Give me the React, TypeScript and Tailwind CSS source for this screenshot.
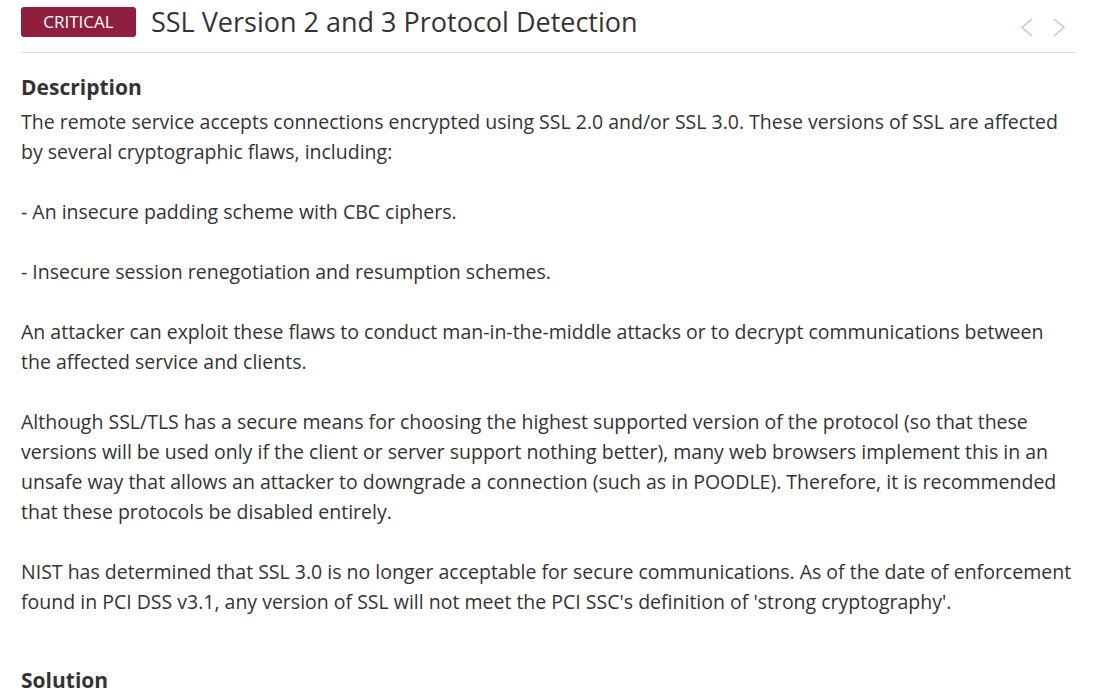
const description = `The remote service accepts connections encrypted using SSL 2.0 and/or SSL 3.0. These versions of SSL are affected by several cryptographic flaws, including:

- An insecure padding scheme with CBC ciphers.

- Insecure session renegotiation and resumption schemes.

An attacker can exploit these flaws to conduct man-in-the-middle attacks or to decrypt communications between the affected service and clients.

Although SSL/TLS has a secure means for choosing the highest supported version of the protocol (so that these versions will be used only if the client or server support nothing better), many web browsers implement this in an unsafe way that allows an attacker to downgrade a connection (such as in POODLE). Therefore, it is recommended that these protocols be disabled entirely.

NIST has determined that SSL 3.0 is no longer acceptable for secure communications. As of the date of enforcement found in PCI DSS v3.1, any version of SSL will not meet the PCI SSC's definition of 'strong cryptography'.`

function Chevron({ dir }: { dir: 'left' | 'right' }) {
  return (
    <svg width="12" height="19" viewBox="0 0 12 19" fill="none" stroke="currentColor" strokeWidth="1.6">
      {dir === 'left' ? <polyline points="11,1 1,9.5 11,18" /> : <polyline points="1,1 11,9.5 1,18" />}
    </svg>
  )
}

export default function App() {
  return (
    <div className="h-[696px] overflow-hidden bg-white font-['Open_Sans',sans-serif] text-[#333]">
      <div className="ml-[21px] w-[1055px]">
        {/* Header */}
        <div className="flex h-[53px] items-start border-b border-[#ddd] pt-[7px]">
          <span className="flex h-[30px] w-[115px] items-center justify-center rounded-[3px] bg-[#8f1f3f] text-[17px] text-white">
            CRITICAL
          </span>
          <h1 className="ml-[15px] flex-1 text-[27px] leading-[30px] text-[#333]">
            SSL Version 2 and 3 Protocol Detection
          </h1>
          <div className="mt-[11px] mr-[11px] flex items-center gap-[20px] text-[#c4cbd3]">
            <Chevron dir="left" />
            <Chevron dir="right" />
          </div>
        </div>

        {/* Description */}
        <h2 className="mt-[22px] text-[21px] font-bold leading-[24px]">Description</h2>
        <p className="mt-[8px] whitespace-pre-line text-[19.5px] leading-[30px]">{description}</p>

        {/* Solution */}
        <h2 className="mt-[51px] text-[21px] font-bold leading-[24px]">Solution</h2>
      </div>
    </div>
  )
}
